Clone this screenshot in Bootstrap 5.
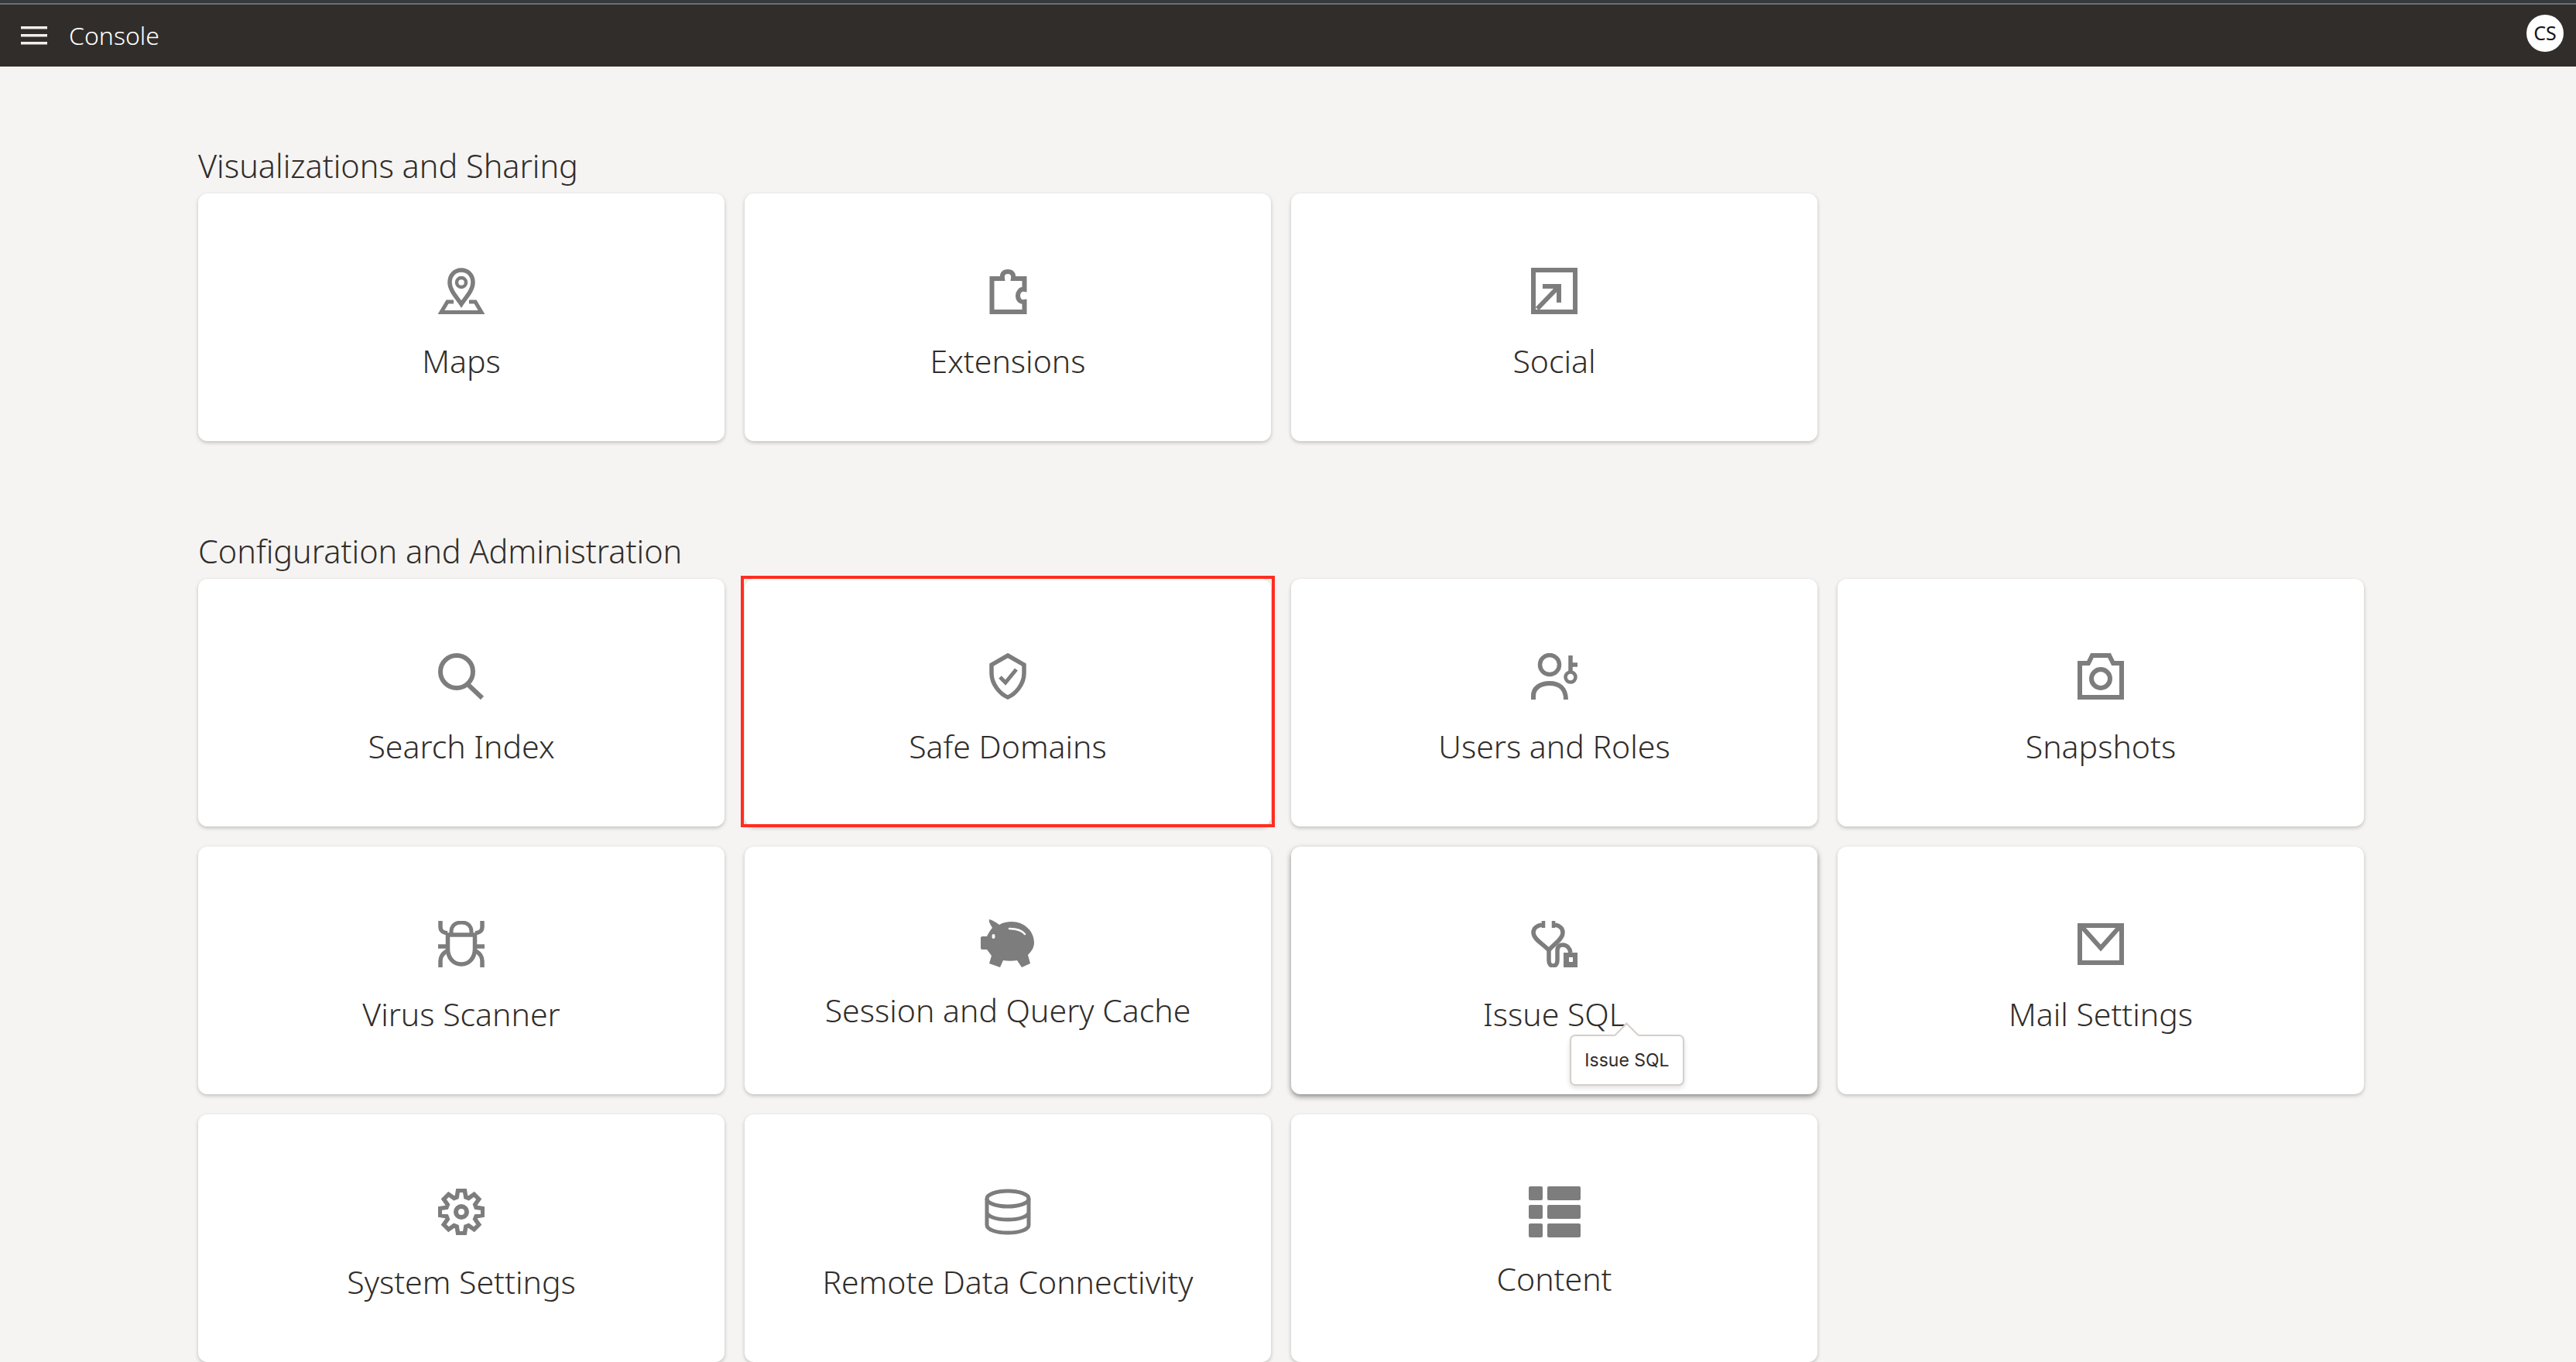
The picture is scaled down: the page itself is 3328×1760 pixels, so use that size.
<!DOCTYPE html>
<html lang="en">
<head>
    <meta charset="UTF-8">
    <title>Console</title>
    <meta name="viewport" content="width=device-width, initial-scale=1.0"/>
    <link href="https://cdn.jsdelivr.net/npm/bootstrap@5.3.0/dist/css/bootstrap.min.css" rel="stylesheet">
    <script src="https://cdn.jsdelivr.net/npm/bootstrap@5.3.3/dist/js/bootstrap.bundle.min.js"></script>
    <style>
        html, body {
            height: 1760px;
            overflow: hidden;
        }
        body {
            background: #f5f4f2;
            color: #312d2a;
            font-family: "Noto Sans", "Open Sans", sans-serif;
            font-weight: 300;
        }
        .top-bar {
            height: 86px;
            background: #312d2a;
            border-top: 4px solid #353a3e;
            color: #fff;
            padding: 2px 16px 0 27px;
            box-shadow: inset 0 2px 0 #6b6f72;
        }
        .top-title {
            font-size: 32px;
            line-height: 40px;
            margin-left: 28px;
        }
        .avatar {
            width: 48px;
            height: 48px;
            background: #fff;
            color: #161513;
            font-size: 25px;
            font-weight: 400;
            margin-top: -6px;
        }
        .page-body {
            padding: 104px 0 0 256px;
        }
        .sect-title {
            font-size: 41.4px;
            line-height: 48px;
            font-weight: 300;
            margin: 0 0 12px;
        }
        .tile-grid {
            display: grid;
            grid-template-columns: repeat(4, 680px);
            grid-auto-rows: 320px;
            gap: 26px;
        }
        .tile-grid + .sect-title {
            margin-top: 118px;
        }
        .tile {
            border: 0;
            border-radius: 12px;
            box-shadow: 0 2px 5px rgba(0, 0, 0, 0.22);
            padding-top: 96px;
            color: #312d2a;
        }
        .tile-hover {
            box-shadow: 0 3px 7px rgba(0, 0, 0, 0.45);
        }
        .tile-ico {
            width: 60px;
            height: 60px;
            margin-bottom: 36px;
            color: #7d7d7d;
            fill: none;
            stroke: currentColor;
            stroke-width: 5.5;
        }
        .ico-piggy {
            width: 70px;
            height: 62px;
            margin-top: -2px;
            margin-bottom: 31px;
            fill: currentColor;
            stroke: none;
        }
        .ico-grid {
            width: 67px;
            height: 66px;
            margin-top: -3px;
            margin-bottom: 29px;
            fill: currentColor;
            stroke: none;
        }
        .tile-label {
            font-size: 41px;
            line-height: 48px;
        }
        .red-mark {
            position: absolute;
            left: -5px;
            right: -5px;
            top: -4px;
            bottom: -1px;
            border: 4px solid #ff2d20;
        }
        .hint {
            position: absolute;
            left: 360px;
            top: 243px;
            width: 148px;
            height: 66px;
            background: #fff;
            border: 2px solid #d4cfca;
            border-radius: 7px;
            box-shadow: 0 3px 6px rgba(0, 0, 0, 0.12);
            font-family: Inter, "Noto Sans", sans-serif;
            font-weight: 400;
            font-size: 23px;
        }
        .hint::before {
            content: "";
            position: absolute;
            left: 60px;
            top: -13px;
            width: 23px;
            height: 23px;
            background: #fff;
            border-top: 2px solid #d4cfca;
            border-left: 2px solid #d4cfca;
            transform: rotate(45deg);
        }
    </style>
</head>
<body>

<header class="top-bar d-flex align-items-center">
    <svg width="34" height="24" viewBox="0 0 34 24" fill="#f0eeeb">
        <rect y="0" width="34" height="3.5"/>
        <rect y="10" width="34" height="3.5"/>
        <rect y="20" width="34" height="3.5"/>
    </svg>
    <span class="top-title">Console</span>
    <span class="avatar ms-auto rounded-circle d-flex align-items-center justify-content-center">CS</span>
</header>

<main class="page-body">

    <!-- Visualizations -->
    <h2 class="sect-title">Visualizations and Sharing</h2>
    <div class="tile-grid">
        <div class="card tile align-items-center">
            <svg class="tile-ico" viewBox="0 0 60 60">
                <path d="M30 3C21 3 15 10 15 19C15 29 24 38 30 47C36 38 45 29 45 19C45 10 39 3 30 3Z"/>
                <circle cx="30" cy="19" r="6" style="stroke-width:4.5"/>
                <path d="M20 44H12L4 57.500H56L48 44H40" style="stroke-width:5"/>
            </svg>
            <div class="tile-label">Maps</div>
        </div>
        <div class="card tile align-items-center">
            <svg class="tile-ico" viewBox="0 0 60 60">
                <path d="M9.500 14H23C22 8 25 5 30 5C35 5 38 8 37 14H51.500V28C46 27 43 32 43 36C43 41 46 45 51.500 44V57H9.500Z" style="stroke-width:6"/>
            </svg>
            <div class="tile-label">Extensions</div>
        </div>
        <div class="card tile align-items-center">
            <svg class="tile-ico" viewBox="0 0 60 60">
                <rect x="3" y="3" width="54" height="54" style="stroke-width:6"/>
                <path d="M15 24H36V45M36 24L8 53" style="stroke-width:6"/>
            </svg>
            <div class="tile-label">Social</div>
        </div>
    </div>

    <!-- Configuration -->
    <h2 class="sect-title">Configuration and Administration</h2>
    <div class="tile-grid">
        <div class="card tile align-items-center">
            <svg class="tile-ico" viewBox="0 0 60 60">
                <circle cx="24" cy="24" r="21" style="stroke-width:6"/>
                <path d="M39 41L57 58" style="stroke-width:6"/>
            </svg>
            <div class="tile-label">Search Index</div>
        </div>
        <div class="card tile align-items-center position-relative">
            <svg class="tile-ico" viewBox="0 0 60 60">
                <path d="M30 3L51 15V26C51 40 40 53 30 57C20 53 9 40 9 26V15Z"/>
                <path d="M20 31L27 38L41 21" style="stroke-width:5"/>
            </svg>
            <div class="tile-label">Safe Domains</div>
            <span class="red-mark"></span>
        </div>
        <div class="card tile align-items-center">
            <svg class="tile-ico" viewBox="0 0 60 60">
                <circle cx="24" cy="15" r="12.500"/>
                <path d="M3 60V55C3 45 12 39 24 39C36 39 45 45 45 60" style="stroke-width:6"/>
                <circle cx="51" cy="31" r="6.500" style="stroke-width:4.500"/>
                <path d="M51 3V25M51 15H60"/>
            </svg>
            <div class="tile-label">Users and Roles</div>
        </div>
        <div class="card tile align-items-center">
            <svg class="tile-ico" viewBox="0 0 60 60">
                <path d="M3 13H14L19 3H41L46 13H57V57H3Z" style="stroke-width:6"/>
                <circle cx="30" cy="33" r="12" style="stroke-width:6"/>
            </svg>
            <div class="tile-label">Snapshots</div>
        </div>

        <div class="card tile align-items-center">
            <svg class="tile-ico" viewBox="0 0 60 60">
                <path d="M10 18H50M12.500 18V36C12.500 48 20 56 30 56C40 56 47.500 48 47.500 36V18" style="stroke-width:5.500"/>
                <path d="M17 18V14C17 6 22 2 30 2C38 2 43 6 43 14V18" style="stroke-width:5"/>
                <path d="M3 0V8C3 13 6 15 12 16M57 0V8C57 13 54 15 48 16M0 33H12M48 33H60M3 60V52C3 46 6 42 11 39M57 60V52C57 46 54 42 49 39" style="stroke-width:5.500"/>
            </svg>
            <div class="tile-label">Virus Scanner</div>
        </div>
        <div class="card tile align-items-center">
            <svg class="tile-ico ico-piggy" viewBox="0 0 70 62">
                <path d="M11 0C15 1 20 4 24 7C29 4 34 3 40 3C56 3 69 15 69 30C69 36 66 41 61 46L64 57L53 62L47 53C41 54 35 54 29 53L25 62L11 57L14 47C12 44 10 42 8 39H2Q0 39 0 37V24Q0 22 2 22H8C10 18 12 14 15 11C13 7 10 4 11 0Z"/>
                <ellipse cx="16.500" cy="22" rx="2" ry="3" fill="#fff"/>
                <path d="M37 12C44 12 52 13 57 19" fill="none" stroke="#fff" stroke-width="2.500" stroke-linecap="round"/>
            </svg>
            <div class="tile-label">Session and Query Cache</div>
        </div>
        <div class="card tile tile-hover align-items-center position-relative">
            <svg class="tile-ico" viewBox="0 0 60 60">
                <path d="M14 5C7 6 3 10 3 15C3 24 16 30 23 38C29 30 41 24 41 15C41 10 37 6 31 5" style="stroke-width:5.500"/>
                <path d="M16 0V9M29 0V9" style="stroke-width:4.500"/>
                <path d="M23 36V51C23 55 25 58 28.500 58C32 58 34 55 34 51V38C34 33 37 31 41 31C46 31 50 35 51 41" style="stroke-width:5.500"/>
                <path fill-rule="evenodd" d="M42 41H60V60H42ZM49 47V53H54V47Z" fill="currentColor" stroke="none"/>
            </svg>
            <div class="tile-label">Issue SQL</div>
            <div class="hint d-flex align-items-center justify-content-center">Issue SQL</div>
        </div>
        <div class="card tile align-items-center">
            <svg class="tile-ico" viewBox="0 0 60 60">
                <rect x="3" y="6" width="54" height="48" style="stroke-width:6"/>
                <path d="M5 7L30 35L55 7" style="stroke-width:6"/>
            </svg>
            <div class="tile-label">Mail Settings</div>
        </div>

        <div class="card tile align-items-center">
            <svg class="tile-ico" viewBox="0 0 60 60">
                <path d="M24.200 10.900L25.600 2.300H34.400L35.800 10.900L39.400 12.300L46.500 7.300L52.700 13.500L47.700 20.600L49.100 24.200L57.700 25.600V34.400L49.100 35.800L47.700 39.400L52.700 46.500L46.500 52.700L39.400 47.700L35.800 49.100L34.400 57.700H25.600L24.200 49.100L20.600 47.700L13.500 52.700L7.300 46.500L12.300 39.400L10.900 35.800L2.300 34.400V25.600L10.900 24.200L12.300 20.600L7.300 13.500L13.500 7.300L20.600 12.300Z"/>
                <circle cx="30" cy="30" r="7" style="stroke-width:6"/>
            </svg>
            <div class="tile-label">System Settings</div>
        </div>
        <div class="card tile align-items-center">
            <svg class="tile-ico" viewBox="0 0 60 60">
                <ellipse cx="30" cy="13" rx="27" ry="10" style="stroke-width:5"/>
                <path d="M3 13V47C3 53 15 57 30 57C45 57 57 53 57 47V13M3 30C3 36 15 40 30 40C45 40 57 36 57 30" style="stroke-width:5"/>
            </svg>
            <div class="tile-label">Remote Data Connectivity</div>
        </div>
        <div class="card tile align-items-center">
            <svg class="tile-ico ico-grid" viewBox="0 0 67 66">
                <rect width="18" height="18" rx="2"/>
                <rect x="24" width="43" height="18" rx="2"/>
                <rect y="24" width="18" height="18" rx="2"/>
                <rect x="24" y="24" width="43" height="18" rx="2"/>
                <rect y="48" width="18" height="18" rx="2"/>
                <rect x="24" y="48" width="43" height="18" rx="2"/>
            </svg>
            <div class="tile-label">Content</div>
        </div>
    </div>

</main>

</body>
</html>
